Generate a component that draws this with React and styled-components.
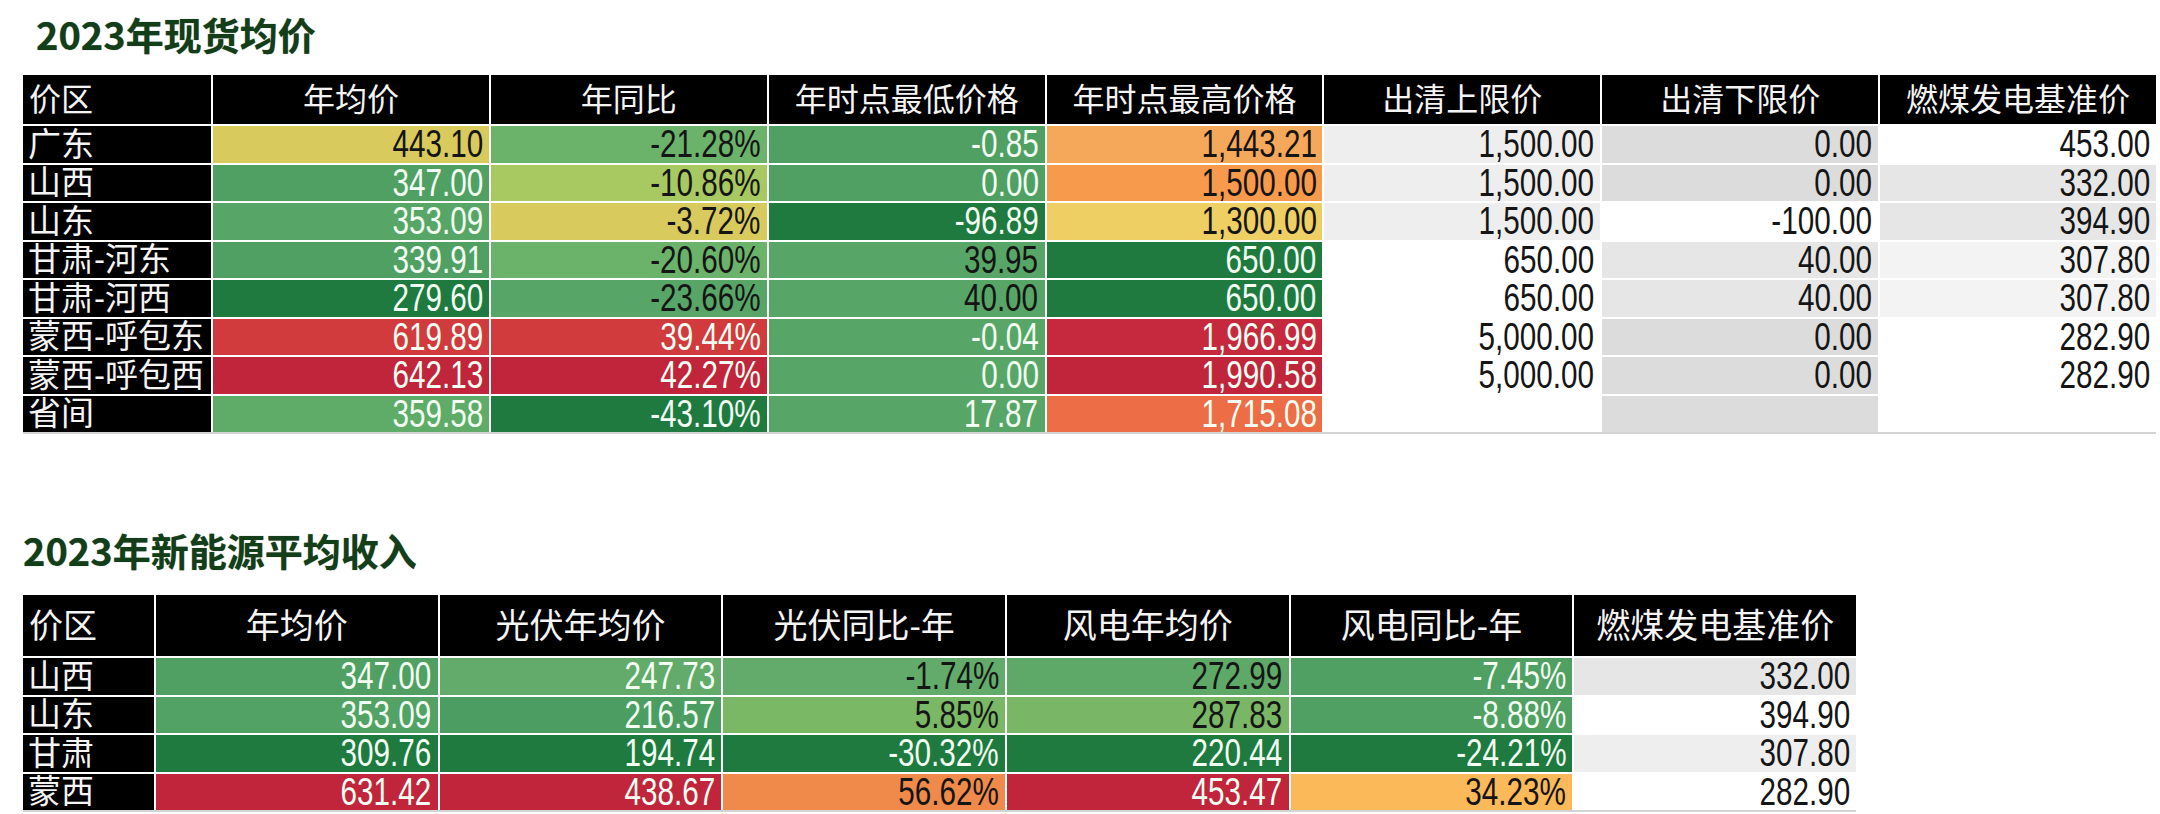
import React from 'react';
import styled, { createGlobalStyle } from 'styled-components';

const GlobalStyle = createGlobalStyle`
  html, body {
    margin: 0;
    padding: 0;
    background: #ffffff;
  }
  body {
    font-family: "Liberation Sans", "Noto Sans CJK SC", sans-serif;
  }
`;

// colour scale taken from the spreadsheet's conditional formatting
const C = {
  dkGreen: '#1f7a40',
  green: '#50a064',
  midGreen: '#58a667',
  ltGreen: '#6bb26a',
  ygGreen: '#a8c862',
  leaf: '#7ab866',
  yellow: '#d8ca5d',
  gold: '#eecf63',
  orange: '#f6a85a',
  dkOrange: '#f89a4c',
  apricot: '#f08a4b',
  amber: '#fbb95a',
  coral: '#ec6d46',
  red: '#d13b3e',
  rose: '#c6293e',
  crimson: '#c1253c',
  gray: '#dcdcdc',
  silver: '#e6e6e6',
  ltGray: '#eeeeee',
  pale: '#f3f3f3',
  white: '#ffffff',
};

const spotHead = ['价区', '年均价', '年同比', '年时点最低价格', '年时点最高价格', '出清上限价', '出清下限价', '燃煤发电基准价'];

// [value, background, light text]
const spotRows = [
  ['广东', [['443.10', C.yellow], ['-21.28%', C.ltGreen], ['-0.85', C.green, 1], ['1,443.21', C.orange], ['1,500.00', C.ltGray], ['0.00', C.gray], ['453.00', C.white]]],
  ['山西', [['347.00', C.green, 1], ['-10.86%', C.ygGreen], ['0.00', C.green, 1], ['1,500.00', C.dkOrange], ['1,500.00', C.ltGray], ['0.00', C.gray], ['332.00', C.silver]]],
  ['山东', [['353.09', C.midGreen, 1], ['-3.72%', C.yellow], ['-96.89', C.dkGreen, 1], ['1,300.00', C.gold], ['1,500.00', C.ltGray], ['-100.00', C.white], ['394.90', C.silver]]],
  ['甘肃-河东', [['339.91', C.green, 1], ['-20.60%', C.ltGreen], ['39.95', C.midGreen], ['650.00', C.dkGreen, 1], ['650.00', C.white], ['40.00', C.silver], ['307.80', C.pale]]],
  ['甘肃-河西', [['279.60', C.dkGreen, 1], ['-23.66%', C.midGreen], ['40.00', C.midGreen], ['650.00', C.dkGreen, 1], ['650.00', C.white], ['40.00', C.silver], ['307.80', C.pale]]],
  ['蒙西-呼包东', [['619.89', C.red, 1], ['39.44%', C.red, 1], ['-0.04', C.midGreen, 1], ['1,966.99', C.rose, 1], ['5,000.00', C.white], ['0.00', C.gray], ['282.90', C.white]]],
  ['蒙西-呼包西', [['642.13', C.crimson, 1], ['42.27%', C.crimson, 1], ['0.00', C.midGreen, 1], ['1,990.58', C.crimson, 1], ['5,000.00', C.white], ['0.00', C.gray], ['282.90', C.white]]],
  ['省间', [['359.58', '#5fab68', 1], ['-43.10%', C.dkGreen, 1], ['17.87', C.midGreen, 1], ['1,715.08', C.coral, 1], ['', C.white], ['', C.gray], ['', C.white]]],
];

const greenHead = ['价区', '年均价', '光伏年均价', '光伏同比-年', '风电年均价', '风电同比-年', '燃煤发电基准价'];

const greenRows = [
  ['山西', [['347.00', C.green, 1], ['247.73', '#62ab6a', 1], ['-1.74%', '#62ab6a'], ['272.99', '#5ea968'], ['-7.45%', C.green, 1], ['332.00', C.silver]]],
  ['山东', [['353.09', '#53a265', 1], ['216.57', '#4c9d62', 1], ['5.85%', C.leaf], ['287.83', '#79b766'], ['-8.88%', C.green, 1], ['394.90', C.white]]],
  ['甘肃', [['309.76', C.dkGreen, 1], ['194.74', C.dkGreen, 1], ['-30.32%', C.dkGreen, 1], ['220.44', C.dkGreen, 1], ['-24.21%', C.dkGreen, 1], ['307.80', C.ltGray]]],
  ['蒙西', [['631.42', C.crimson, 1], ['438.67', C.crimson, 1], ['56.62%', C.apricot], ['453.47', C.crimson, 1], ['34.23%', C.amber], ['282.90', C.white]]],
];

const Page = styled.div`
  padding: 15px 0 0 23px;
  display: flex;
  flex-direction: column;
`;

const Title = styled.h2`
  margin: ${p => p.$top}px 0 ${p => p.$bottom}px;
  padding-left: ${p => p.$indent}px;
  font-family: "Noto Sans CJK SC", sans-serif;
  font-weight: 700;
  font-size: 38px;
  line-height: 38px;
  color: #143d19;
  text-shadow: 0 0 1px rgba(20, 61, 25, 0.6);
`;

const Grid = styled.div`
  display: grid;
  width: ${p => p.$width}px;
  grid-template-columns: ${p => p.$first}px repeat(${p => p.$count}, 1fr);
  grid-template-rows: ${p => p.$head}px;
  grid-auto-rows: 36.5px;
  gap: 2px;
  background: #ffffff;
  border-bottom: 2px solid #d4d4d4;
`;

const HeadCell = styled.div`
  display: flex;
  align-items: center;
  justify-content: ${p => (p.$left ? 'flex-start' : 'center')};
  padding: 0 6px;
  background: #000000;
  color: #f4f4f4;
  font-size: ${p => p.$size}px;
  line-height: 1;
  white-space: nowrap;
`;

const LabelCell = styled.div`
  display: flex;
  align-items: center;
  padding: 0 5px;
  background: #000000;
  color: #f4f4f4;
  font-size: 33px;
  line-height: 1;
  white-space: nowrap;
`;

const ValueCell = styled.div`
  display: flex;
  align-items: center;
  justify-content: flex-end;
  padding: 0 6px;
  background: ${p => p.$bg};
  color: ${p => (p.$light ? '#f2fff2' : '#151515')};
  font-family: "Liberation Sans", sans-serif;
  font-size: 38px;
  line-height: 1;
  white-space: nowrap;
`;

// the sheet uses a narrow face; squeeze the regular one to match
const Num = styled.span`
  display: inline-block;
  transform: scaleX(0.78);
  transform-origin: right center;
`;

const DataTable = ({ head, rows, first, width, headHeight, headSize }) => (
  <Grid $width={width} $first={first} $count={head.length - 1} $head={headHeight}>
    {head.map((h, i) => (
      <HeadCell key={h} $left={i === 0} $size={headSize}>{h}</HeadCell>
    ))}
    {rows.map(([label, cells]) => (
      <React.Fragment key={label}>
        <LabelCell>{label}</LabelCell>
        {cells.map(([v, bg, light], i) => (
          <ValueCell key={i} $bg={bg} $light={light}><Num>{v}</Num></ValueCell>
        ))}
      </React.Fragment>
    ))}
  </Grid>
);

export default function App() {
  return (
    <>
      <GlobalStyle />
      <Page>
        <Title $top={0} $bottom={22} $indent={13}>2023年现货均价</Title>
        <DataTable head={spotHead} rows={spotRows} first={188} width={2133} headHeight={49} headSize={32} />
        <Title $top={97} $bottom={26} $indent={0}>2023年新能源平均收入</Title>
        <DataTable head={greenHead} rows={greenRows} first={131} width={1833} headHeight={61} headSize={34} />
      </Page>
    </>
  );
}
